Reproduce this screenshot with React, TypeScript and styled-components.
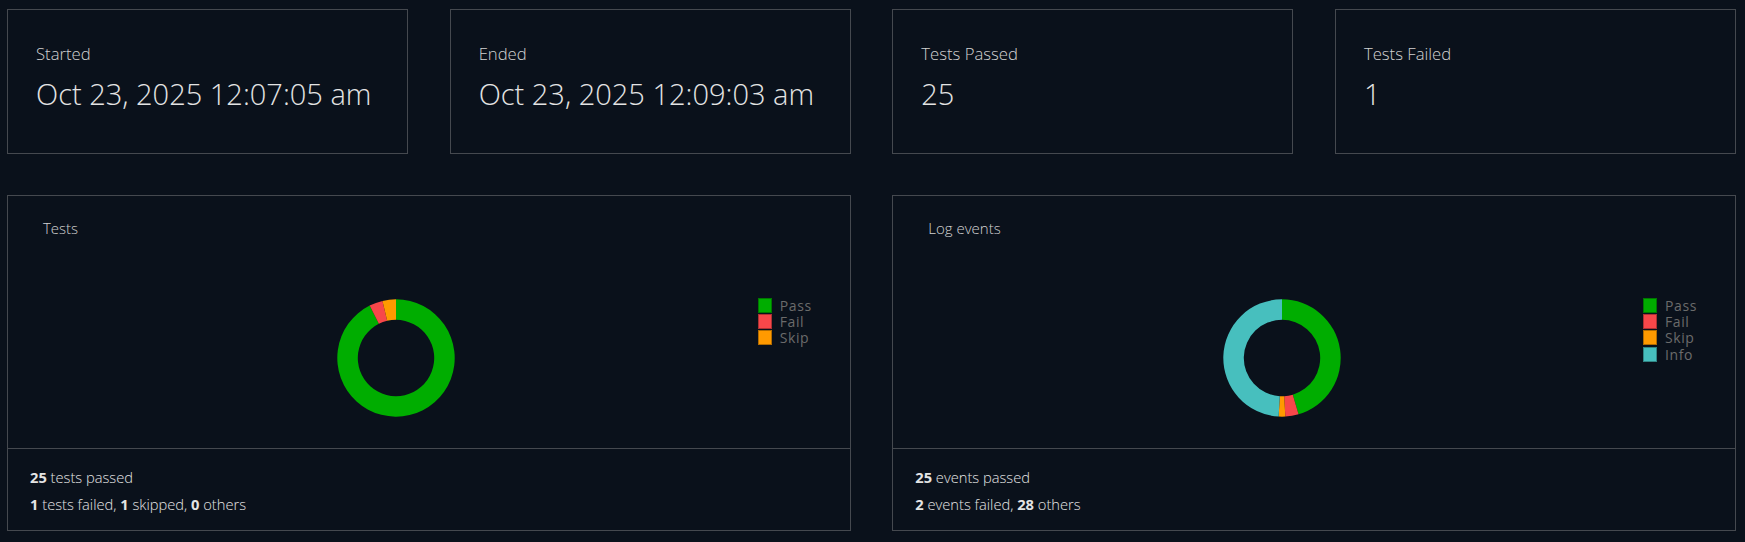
import React from "react";
import styled, { createGlobalStyle } from "styled-components";

const colors = {
  bg: "#0a111b",
  border: "#45494f",
  text: "#e4e4e4",
  label: "#d2d2d2",
  legend: "#6b6b6b",
  pass: "#00ad00",
  fail: "#f7474a",
  skip: "#ff9a00",
  info: "#47bfbe",
};

type Slice = { label: string; value: number; color: string };

const stats = [
  { label: "Started", value: "Oct 23, 2025 12:07:05 am" },
  { label: "Ended", value: "Oct 23, 2025 12:09:03 am" },
  { label: "Tests Passed", value: "25" },
  { label: "Tests Failed", value: "1" },
];

const testSlices: Slice[] = [
  { label: "Pass", value: 25, color: colors.pass },
  { label: "Fail", value: 1, color: colors.fail },
  { label: "Skip", value: 1, color: colors.skip },
];

const eventSlices: Slice[] = [
  { label: "Pass", value: 25, color: colors.pass },
  { label: "Fail", value: 2, color: colors.fail },
  { label: "Skip", value: 1, color: colors.skip },
  { label: "Info", value: 27, color: colors.info },
];

const GlobalStyle = createGlobalStyle`
  html, body {
    margin: 0;
    background: ${colors.bg};
  }
  body {
    font-family: "Open Sans", "Noto Sans", sans-serif;
    color: ${colors.text};
  }
  * {
    box-sizing: border-box;
  }
`;

function Donut({ slices }: { slices: Slice[] }) {
  const size = 118;
  const c = size / 2;
  const ro = 58.7;
  const ri = 38.2;
  const total = slices.reduce((s, x) => s + x.value, 0);

  const point = (r: number, a: number) => {
    const rad = (a - 90) * (Math.PI / 180);
    return `${(c + r * Math.cos(rad)).toFixed(3)} ${(c + r * Math.sin(rad)).toFixed(3)}`;
  };

  let start = 0;
  return (
    <svg width={size} height={size} viewBox={`0 0 ${size} ${size}`}>
      {slices.map((s) => {
        const sweep = (s.value / total) * 360;
        const end = start + sweep;
        const large = sweep > 180 ? 1 : 0;
        const d = [
          `M ${point(ro, start)}`,
          `A ${ro} ${ro} 0 ${large} 1 ${point(ro, end)}`,
          `L ${point(ri, end)}`,
          `A ${ri} ${ri} 0 ${large} 0 ${point(ri, start)}`,
          "Z",
        ].join(" ");
        start = end;
        return <path key={s.label} d={d} fill={s.color} />;
      })}
    </svg>
  );
}

function ChartPanel({
  title,
  slices,
  children,
}: {
  title: string;
  slices: Slice[];
  children: React.ReactNode;
}) {
  return (
    <StyledPanel>
      <StyledPanelTitle>{title}</StyledPanelTitle>
      <StyledChartBody>
        <StyledDonutArea>
          <Donut slices={slices} />
        </StyledDonutArea>
        <StyledLegend>
          {slices.map((s) => (
            <StyledLegendItem key={s.label}>
              <StyledLegendBox color={s.color} />
              <span>{s.label}</span>
            </StyledLegendItem>
          ))}
        </StyledLegend>
      </StyledChartBody>
      <StyledPanelFooter>{children}</StyledPanelFooter>
    </StyledPanel>
  );
}

function App() {
  return (
    <StyledRoot>
      <GlobalStyle />
      <StyledStatRow>
        {stats.map((s) => (
          <StyledStatCard key={s.label}>
            <StyledStatLabel>{s.label}</StyledStatLabel>
            <StyledStatValue>{s.value}</StyledStatValue>
          </StyledStatCard>
        ))}
      </StyledStatRow>
      <StyledChartRow>
        <ChartPanel title="Tests" slices={testSlices}>
          <p>
            <b>25</b> tests passed
          </p>
          <p>
            <b>1</b> tests failed, <b>1</b> skipped, <b>0</b> others
          </p>
        </ChartPanel>
        <ChartPanel title="Log events" slices={eventSlices}>
          <p>
            <b>25</b> events passed
          </p>
          <p>
            <b>2</b> events failed, <b>28</b> others
          </p>
        </ChartPanel>
      </StyledChartRow>
    </StyledRoot>
  );
}

const StyledRoot = styled.div`
  padding: 9px 9px 11px 7px;
  display: flex;
  flex-direction: column;
  gap: 41px;
`;

const StyledStatRow = styled.div`
  display: grid;
  grid-template-columns: repeat(4, 1fr);
  gap: 41.5px;
`;

const StyledStatCard = styled.div`
  height: 145px;
  border: 1px solid ${colors.border};
  padding: 32px 28px 0;
`;

const StyledStatLabel = styled.div`
  font-size: 16.7px;
  line-height: 24px;
  font-weight: 300;
  color: ${colors.label};
`;

const StyledStatValue = styled.div`
  margin-top: 8px;
  font-size: 29px;
  line-height: 40px;
  font-weight: 300;
  color: ${colors.text};
`;

const StyledChartRow = styled.div`
  display: grid;
  grid-template-columns: repeat(2, 1fr);
  gap: 41.5px;
`;

const StyledPanel = styled.div`
  border: 1px solid ${colors.border};
  display: flex;
  flex-direction: column;
`;

const StyledPanelTitle = styled.div`
  padding: 22px 0 0 35px;
  font-size: 15px;
  line-height: 20px;
  font-weight: 300;
  color: ${colors.label};
`;

const StyledChartBody = styled.div`
  height: 210px;
  display: flex;
  align-items: flex-start;
  padding: 61px 42px 0 27px;
`;

const StyledDonutArea = styled.div`
  flex: 1;
  display: flex;
  justify-content: center;
`;

const StyledLegend = styled.div`
  width: 50px;
  margin-top: -2px;
  display: flex;
  flex-direction: column;
`;

const StyledLegendItem = styled.div`
  height: 16.4px;
  display: flex;
  align-items: center;
  gap: 8px;
  font-size: 14px;
  letter-spacing: 0.6px;
  color: ${colors.legend};
`;

const StyledLegendBox = styled.span<{ color: string }>`
  width: 14px;
  height: 15px;
  flex: none;
  background: ${(p) => p.color};
  border: 1px solid rgba(0, 0, 0, 0.3);
`;

const StyledPanelFooter = styled.div`
  height: 82px;
  border-top: 1px solid ${colors.border};
  padding: 15px 22px 0;
  font-size: 14.7px;
  font-weight: 300;
  color: ${colors.text};
  & > p {
    margin: 0;
    line-height: 26.7px;
  }
  & b {
    font-weight: 700;
  }
`;

export default App;
